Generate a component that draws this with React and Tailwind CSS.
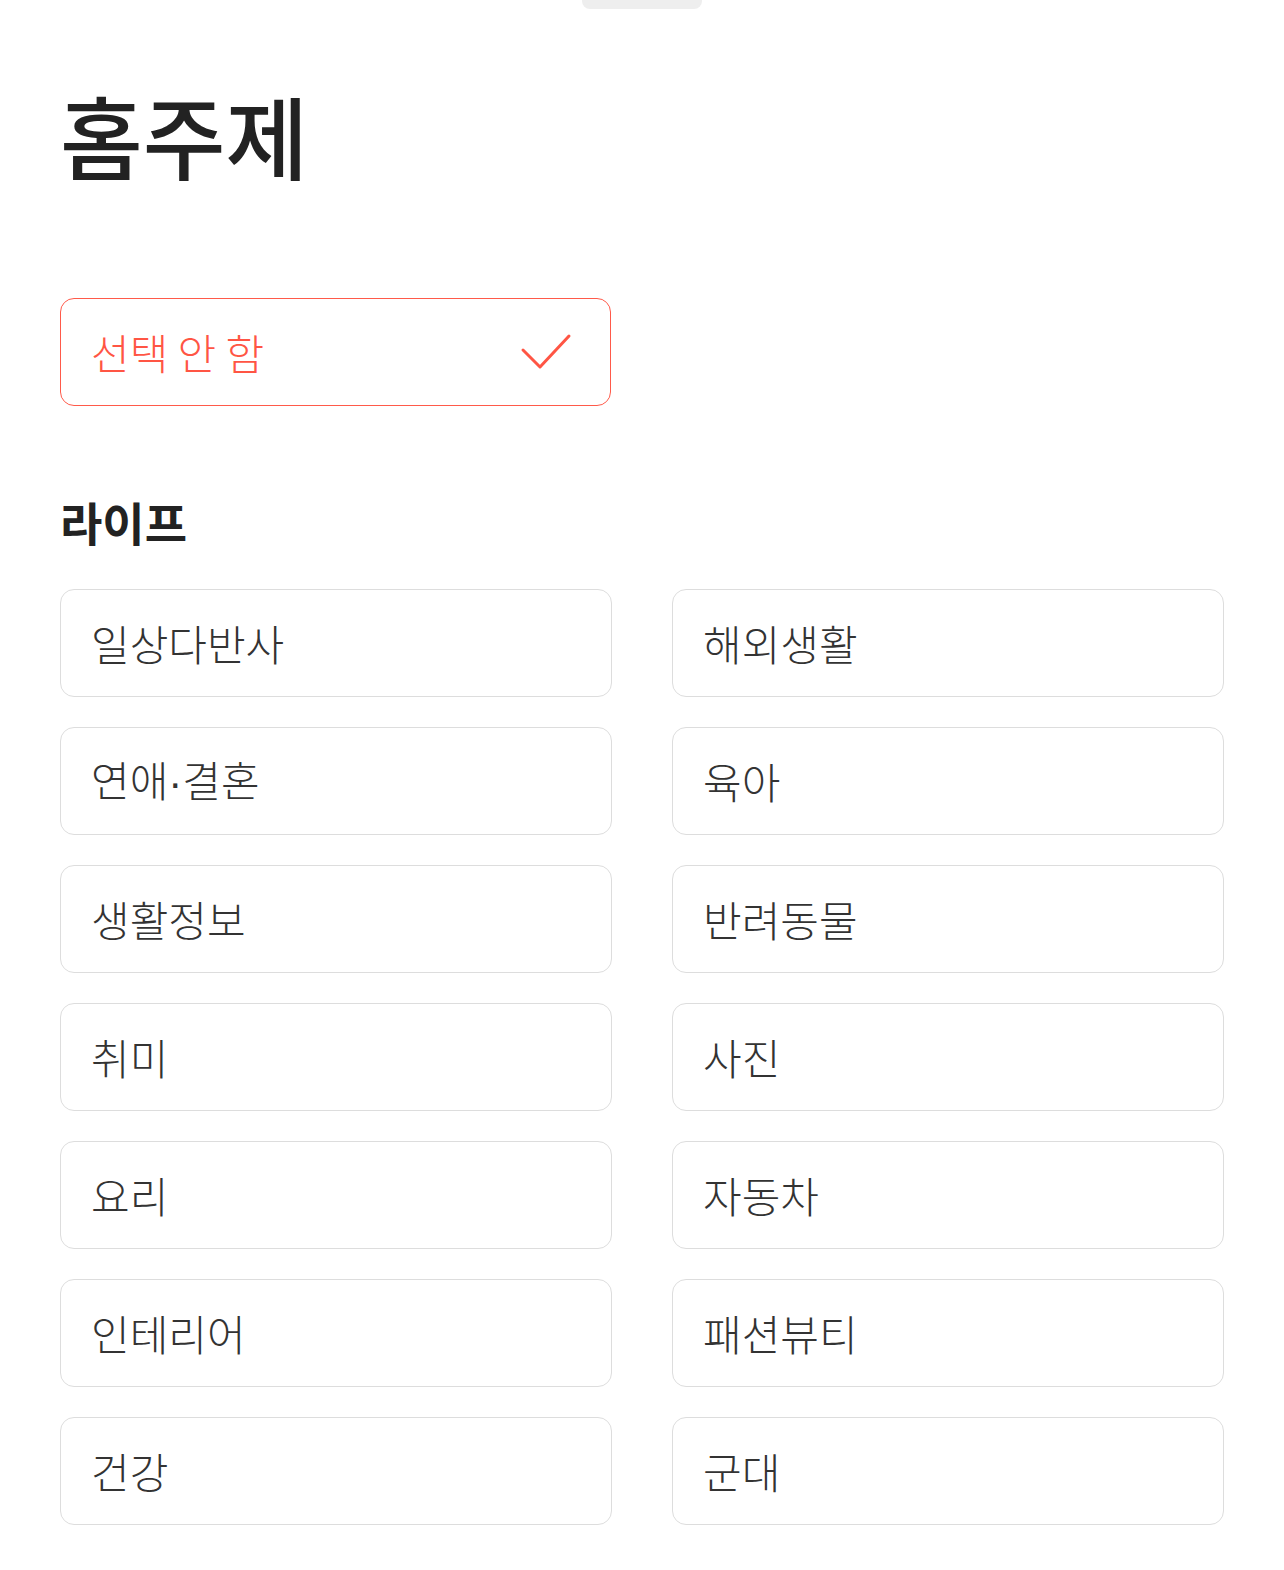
import React from "react";

const topics = [
  ["일상다반사", "해외생활"],
  ["연애·결혼", "육아"],
  ["생활정보", "반려동물"],
  ["취미", "사진"],
  ["요리", "자동차"],
  ["인테리어", "패션뷰티"],
  ["건강", "군대"],
];

// the middle dot is narrow in the reference font, so take it from a latin face
const renderLabel = (label) =>
  label.split("·").flatMap((part, i) =>
    i === 0
      ? [part]
      : [
          <span key={i} className="font-['Liberation_Sans',sans-serif]">
            ·
          </span>,
          part,
        ]
  );

const TopicCard = ({ label }) => (
  <button className="h-[108px] rounded-[14px] border border-[#dddddd] bg-white px-[30px] text-left text-[42px] font-light leading-none text-[#333333]">
    {renderLabel(label)}
  </button>
);

const App = () => {
  return (
    <div
      className="min-h-[1570px] w-full bg-white"
      style={{ fontFamily: '"Noto Sans CJK KR", "Noto Sans", sans-serif' }}
    >
      {/* drag handle */}
      <div className="flex justify-center">
        <div className="h-[9px] w-[120px] rounded-b-[8px] bg-[#eeeeee]" />
      </div>

      <div className="px-[60px]">
        <h1 className="mt-[70px] text-[90px] font-medium leading-[110px] text-[#222222]">
          홈주제
        </h1>

        <button className="mt-[109px] flex h-[108px] w-[551px] items-center justify-between rounded-[14px] border-[1.5px] border-[#ff5a4a] pl-[30px] pr-[38px] text-[42px] font-light leading-none text-[#ff5544]">
          <span>선택 안 함</span>
          <svg width="52" height="40" viewBox="0 0 52 40" fill="none">
            <path d="M3 18 L20 35 L49 4" stroke="#ff5544" strokeWidth="3" strokeLinecap="round" strokeLinejoin="round" />
          </svg>
        </button>

        <h2 className="mt-[85px] text-[46px] font-bold leading-[60px] text-[#222222]">라이프</h2>

        <div className="mt-[38px] grid grid-cols-2 gap-x-[60px] gap-y-[30px]">
          {topics.flat().map((t) => (
            <TopicCard key={t} label={t} />
          ))}
        </div>
      </div>
    </div>
  );
};

export default App;
